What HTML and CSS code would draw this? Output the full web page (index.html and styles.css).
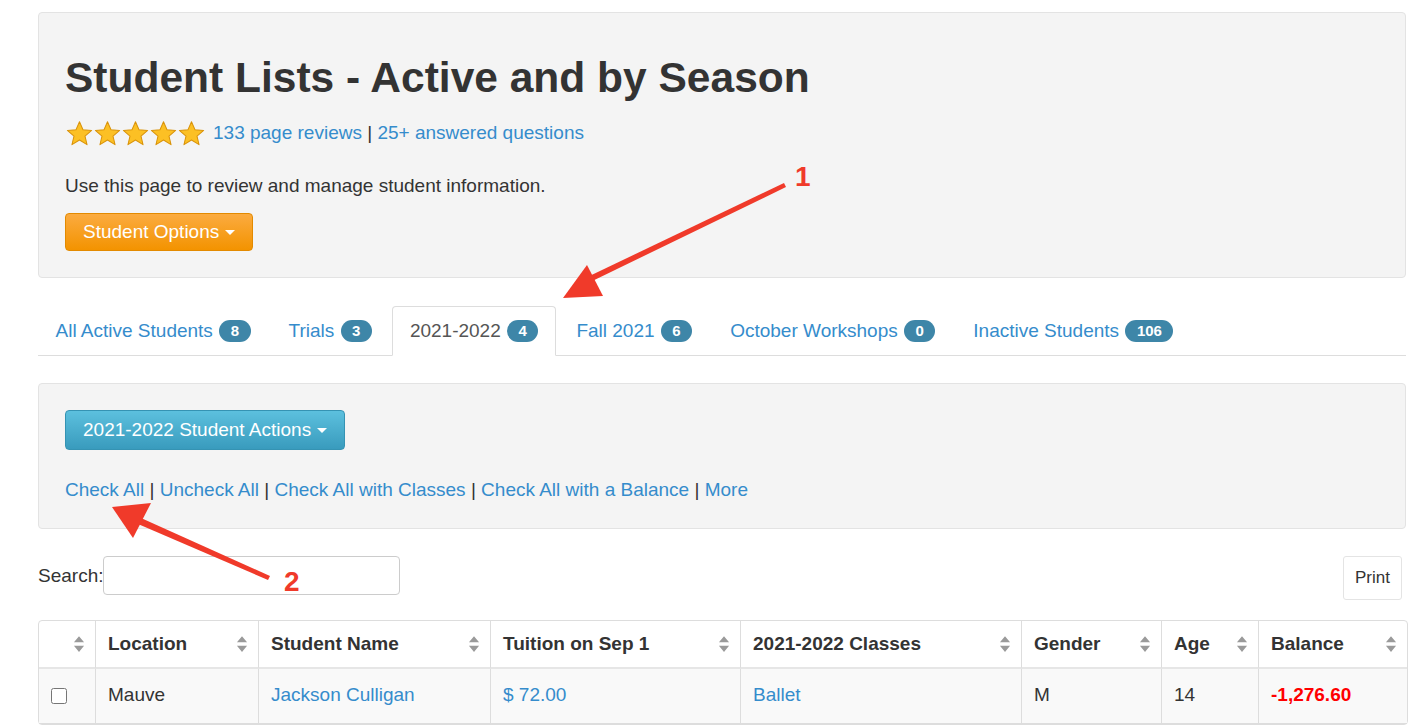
FILE: index.html
```html
<!DOCTYPE html>
<html>
<head>
<meta charset="utf-8">
<title>Student Lists - Active and by Season</title>
<link rel="stylesheet" href="styles.css">
</head>
<body>
<div class="page">
  <section class="hero">
    <h1 class="title">Student Lists - Active and by Season</h1>
    <div class="rating"><span class="stars"><svg class="star" viewBox="0 0 24 24"><path d="M12 1.6l3.1 7.1 7.7.6-5.9 5 1.8 7.6L12 17.8l-6.7 4.1 1.8-7.6-5.9-5 7.7-.6z"/></svg><svg class="star" viewBox="0 0 24 24"><path d="M12 1.6l3.1 7.1 7.7.6-5.9 5 1.8 7.6L12 17.8l-6.7 4.1 1.8-7.6-5.9-5 7.7-.6z"/></svg><svg class="star" viewBox="0 0 24 24"><path d="M12 1.6l3.1 7.1 7.7.6-5.9 5 1.8 7.6L12 17.8l-6.7 4.1 1.8-7.6-5.9-5 7.7-.6z"/></svg><svg class="star" viewBox="0 0 24 24"><path d="M12 1.6l3.1 7.1 7.7.6-5.9 5 1.8 7.6L12 17.8l-6.7 4.1 1.8-7.6-5.9-5 7.7-.6z"/></svg><svg class="star" viewBox="0 0 24 24"><path d="M12 1.6l3.1 7.1 7.7.6-5.9 5 1.8 7.6L12 17.8l-6.7 4.1 1.8-7.6-5.9-5 7.7-.6z"/></svg></span><span class="rating-text"><a href="#">133 page reviews</a> | <a href="#">25+ answered questions</a></span></div>
    <p class="intro">Use this page to review and manage student information.</p>
    <button class="btn btn-orange">Student Options <span class="caret"></span></button>
  </section>

  <ul class="tabs">
    <li class="tab"><a href="#">All Active Students <span class="badge">8</span></a></li>
    <li class="tab"><a href="#">Trials <span class="badge">3</span></a></li>
    <li class="tab active"><a href="#">2021-2022 <span class="badge">4</span></a></li>
    <li class="tab"><a href="#">Fall 2021 <span class="badge">6</span></a></li>
    <li class="tab"><a href="#">October Workshops <span class="badge">0</span></a></li>
    <li class="tab"><a href="#">Inactive Students <span class="badge">106</span></a></li>
  </ul>

  <section class="actions">
    <button class="btn btn-teal">2021-2022 Student Actions <span class="caret"></span></button>
    <div class="checklinks"><a href="#">Check All</a> | <a href="#">Uncheck All</a> | <a href="#">Check All with Classes</a> | <a href="#">Check All with a Balance</a> | <a href="#">More</a></div>
  </section>

  <div class="toolbar">
    <label class="search">Search:<input type="text" class="search-input"></label>
    <button class="btn-print">Print</button>
  </div>

  <table class="grid">
    <colgroup>
      <col style="width:56px"><col style="width:163px"><col style="width:232px"><col style="width:250px"><col style="width:281px"><col style="width:140px"><col style="width:97px"><col style="width:149px">
    </colgroup>
    <thead>
      <tr>
        <th><span class="th-in"><span></span><svg class="sort" viewBox="0 0 10 16"><path d="M5 1l4.5 5.5h-9z M5 15l4.5-5.5h-9z"/></svg></span></th>
        <th><span class="th-in"><span>Location</span><svg class="sort" viewBox="0 0 10 16"><path d="M5 1l4.5 5.5h-9z M5 15l4.5-5.5h-9z"/></svg></span></th>
        <th><span class="th-in"><span>Student Name</span><svg class="sort" viewBox="0 0 10 16"><path d="M5 1l4.5 5.5h-9z M5 15l4.5-5.5h-9z"/></svg></span></th>
        <th><span class="th-in"><span>Tuition on Sep 1</span><svg class="sort" viewBox="0 0 10 16"><path d="M5 1l4.5 5.5h-9z M5 15l4.5-5.5h-9z"/></svg></span></th>
        <th><span class="th-in"><span>2021-2022 Classes</span><svg class="sort" viewBox="0 0 10 16"><path d="M5 1l4.5 5.5h-9z M5 15l4.5-5.5h-9z"/></svg></span></th>
        <th><span class="th-in"><span>Gender</span><svg class="sort" viewBox="0 0 10 16"><path d="M5 1l4.5 5.5h-9z M5 15l4.5-5.5h-9z"/></svg></span></th>
        <th><span class="th-in"><span>Age</span><svg class="sort" viewBox="0 0 10 16"><path d="M5 1l4.5 5.5h-9z M5 15l4.5-5.5h-9z"/></svg></span></th>
        <th><span class="th-in"><span>Balance</span><svg class="sort" viewBox="0 0 10 16"><path d="M5 1l4.5 5.5h-9z M5 15l4.5-5.5h-9z"/></svg></span></th>
      </tr>
    </thead>
    <tbody>
      <tr>
        <td class="cb-cell"><input type="checkbox" class="cb"></td>
        <td>Mauve</td>
        <td><a href="#">Jackson Culligan</a></td>
        <td><a href="#">$ 72.00</a></td>
        <td><a href="#">Ballet</a></td>
        <td>M</td>
        <td>14</td>
        <td class="neg">-1,276.60</td>
      </tr>
    </tbody>
  </table>

  <svg class="annot" width="1417" height="726" viewBox="0 0 1417 726">
    <polygon class="ann-fill" points="784,183 786,187 582,286 579,281"/>
    <polygon class="ann-fill" points="563,298 587,265 603,296"/>
    <text class="ann-num" x="795" y="186">1</text>
    <polygon class="ann-fill" points="270,576 268,580 138,524 141,518"/>
    <polygon class="ann-fill" points="112,507 151,503 133,538"/>
    <text class="ann-num" x="284" y="591">2</text>
  </svg>
</div>
</body>
</html>
```

FILE: styles.css
```css
* { box-sizing: border-box; }
html, body { margin: 0; padding: 0; background: #fff; }
body {
  font-family: "Liberation Sans", Arial, sans-serif;
  color: #333;
  font-size: 19px;
}
a { color: #358ccc; text-decoration: none; }

.page {
  position: relative;
  padding: 12px 11px 0 38px;
  width: 1417px;
  height: 726px;
  overflow: hidden;
}

.hero {
  background: #f4f4f4;
  border: 1px solid #e3e3e3;
  border-radius: 4px;
  padding: 42px 27px 26px 26px;
}
.title {
  margin: 0;
  font-size: 42.5px;
  line-height: 46px;
  font-weight: bold;
  color: #333;
}
.rating {
  margin-top: 19px;
  display: flex;
  align-items: center;
  height: 26px;
  font-size: 19px;
  color: #333;
  white-space: nowrap;
}
.stars { display: flex; margin-right: 7px; margin-left: 1px; }
.star { width: 27px; height: 27px; margin-right: 1px; }
.star path { fill: #fcc024; stroke: #d9930a; stroke-width: 0.9; stroke-linejoin: round; }

.intro {
  margin: 28px 0 0;
  font-size: 19px;
  line-height: 24px;
}

.btn {
  font-family: "Liberation Sans", Arial, sans-serif;
  font-size: 19px;
  color: #fff;
  border-radius: 4px;
  display: inline-flex;
  align-items: center;
  cursor: pointer;
}
.btn-orange {
  margin-top: 15px;
  height: 38px;
  padding: 0 17px;
  background: linear-gradient(#fbab40, #f39300);
  border: 1px solid #e38a00;
}
.btn-teal {
  height: 40px;
  padding: 0 17px;
  background: linear-gradient(#5cc0de, #399bbd);
  border: 1px solid #3593b3;
}
.caret {
  display: inline-block;
  width: 0; height: 0;
  margin-left: 6px;
  border-left: 5px solid transparent;
  border-right: 5px solid transparent;
  border-top: 5px solid #fff;
}

.tabs {
  list-style: none;
  margin: 28px 0 0;
  padding: 0;
  display: flex;
  border-bottom: 1px solid #ddd;
  height: 50px;
}
.tab {
  margin-right: 3px;
  margin-bottom: -1px;
  height: 50px;
  border: 1px solid transparent;
  border-radius: 4px 4px 0 0;
}
.tab a {
  display: flex;
  align-items: center;
  height: 100%;
  padding: 0 16.5px;
  color: #358ccc;
  font-size: 19px;
  white-space: pre;
}
.tab.active {
  border-color: #ddd;
  border-bottom-color: #fff;
  background: #fff;
}
.tab.active a { color: #555; }
.badge {
  display: inline-block;
  background: #3e86a8;
  color: #fff;
  font-size: 15px;
  font-weight: bold;
  line-height: 22px;
  padding: 0 11.5px;
  border-radius: 11px;
  margin-left: 1px;
}

.actions {
  margin-top: 27px;
  background: #f4f4f4;
  border: 1px solid #e3e3e3;
  border-radius: 4px;
  padding: 26px 26px 26px;
}
.checklinks {
  margin-top: 28px;
  font-size: 19px;
  line-height: 24px;
  color: #333;
  white-space: nowrap;
}

.toolbar {
  margin-top: 27px;
  display: flex;
  justify-content: space-between;
  align-items: flex-start;
  padding-right: 4px;
}
.search {
  display: flex;
  align-items: center;
  height: 39px;
  font-size: 19px;
}
.search-input {
  width: 297px;
  height: 39px;
  border: 1px solid #ccc;
  border-radius: 4px;
  margin-left: 0;
  background: #fff;
}
.btn-print {
  font-family: "Liberation Sans", Arial, sans-serif;
  font-size: 17px;
  color: #333;
  background: #fff;
  border: 1px solid #e4e4e4;
  border-radius: 3px;
  width: 59px;
  height: 44px;
  padding: 0;
}

.grid {
  margin-top: 20px;
  width: 1368px;
  table-layout: fixed;
  border-collapse: separate;
  border-spacing: 0;
  border: 1px solid #ddd;
  border-radius: 4px;
}
.grid th, .grid td {
  border-left: 1px solid #ddd;
  text-align: left;
  padding: 0 12px;
}
.grid th:first-child, .grid td:first-child { border-left: none; }
.grid th {
  height: 48px;
  font-size: 19px;
  font-weight: bold;
  color: #333;
  border-bottom: 2px solid #e6e6e6;
}
.th-in {
  display: flex;
  justify-content: space-between;
  align-items: center;
}
.sort { width: 12px; height: 18px; flex: none; margin-right: -2px; }
.sort path { fill: #9a9a9a; }
.grid td {
  height: 55px;
  font-size: 19px;
  border-bottom: 1px solid #ddd;
  background: #f9f9f9;
  padding-bottom: 3px;
}
.cb-cell { padding-left: 12px !important; }
.cb {
  width: 16px; height: 16px;
  margin: 2px 0 0 0;
  vertical-align: middle;
}
.neg { color: #ff0000; font-weight: bold; }

.annot {
  position: absolute;
  left: 0; top: 0;
  pointer-events: none;
}
.ann-fill { fill: #f03a2a; }
.ann-num {
  fill: #f03a2a;
  font-family: "Liberation Sans", Arial, sans-serif;
  font-weight: bold;
  font-size: 28px;
}
```
